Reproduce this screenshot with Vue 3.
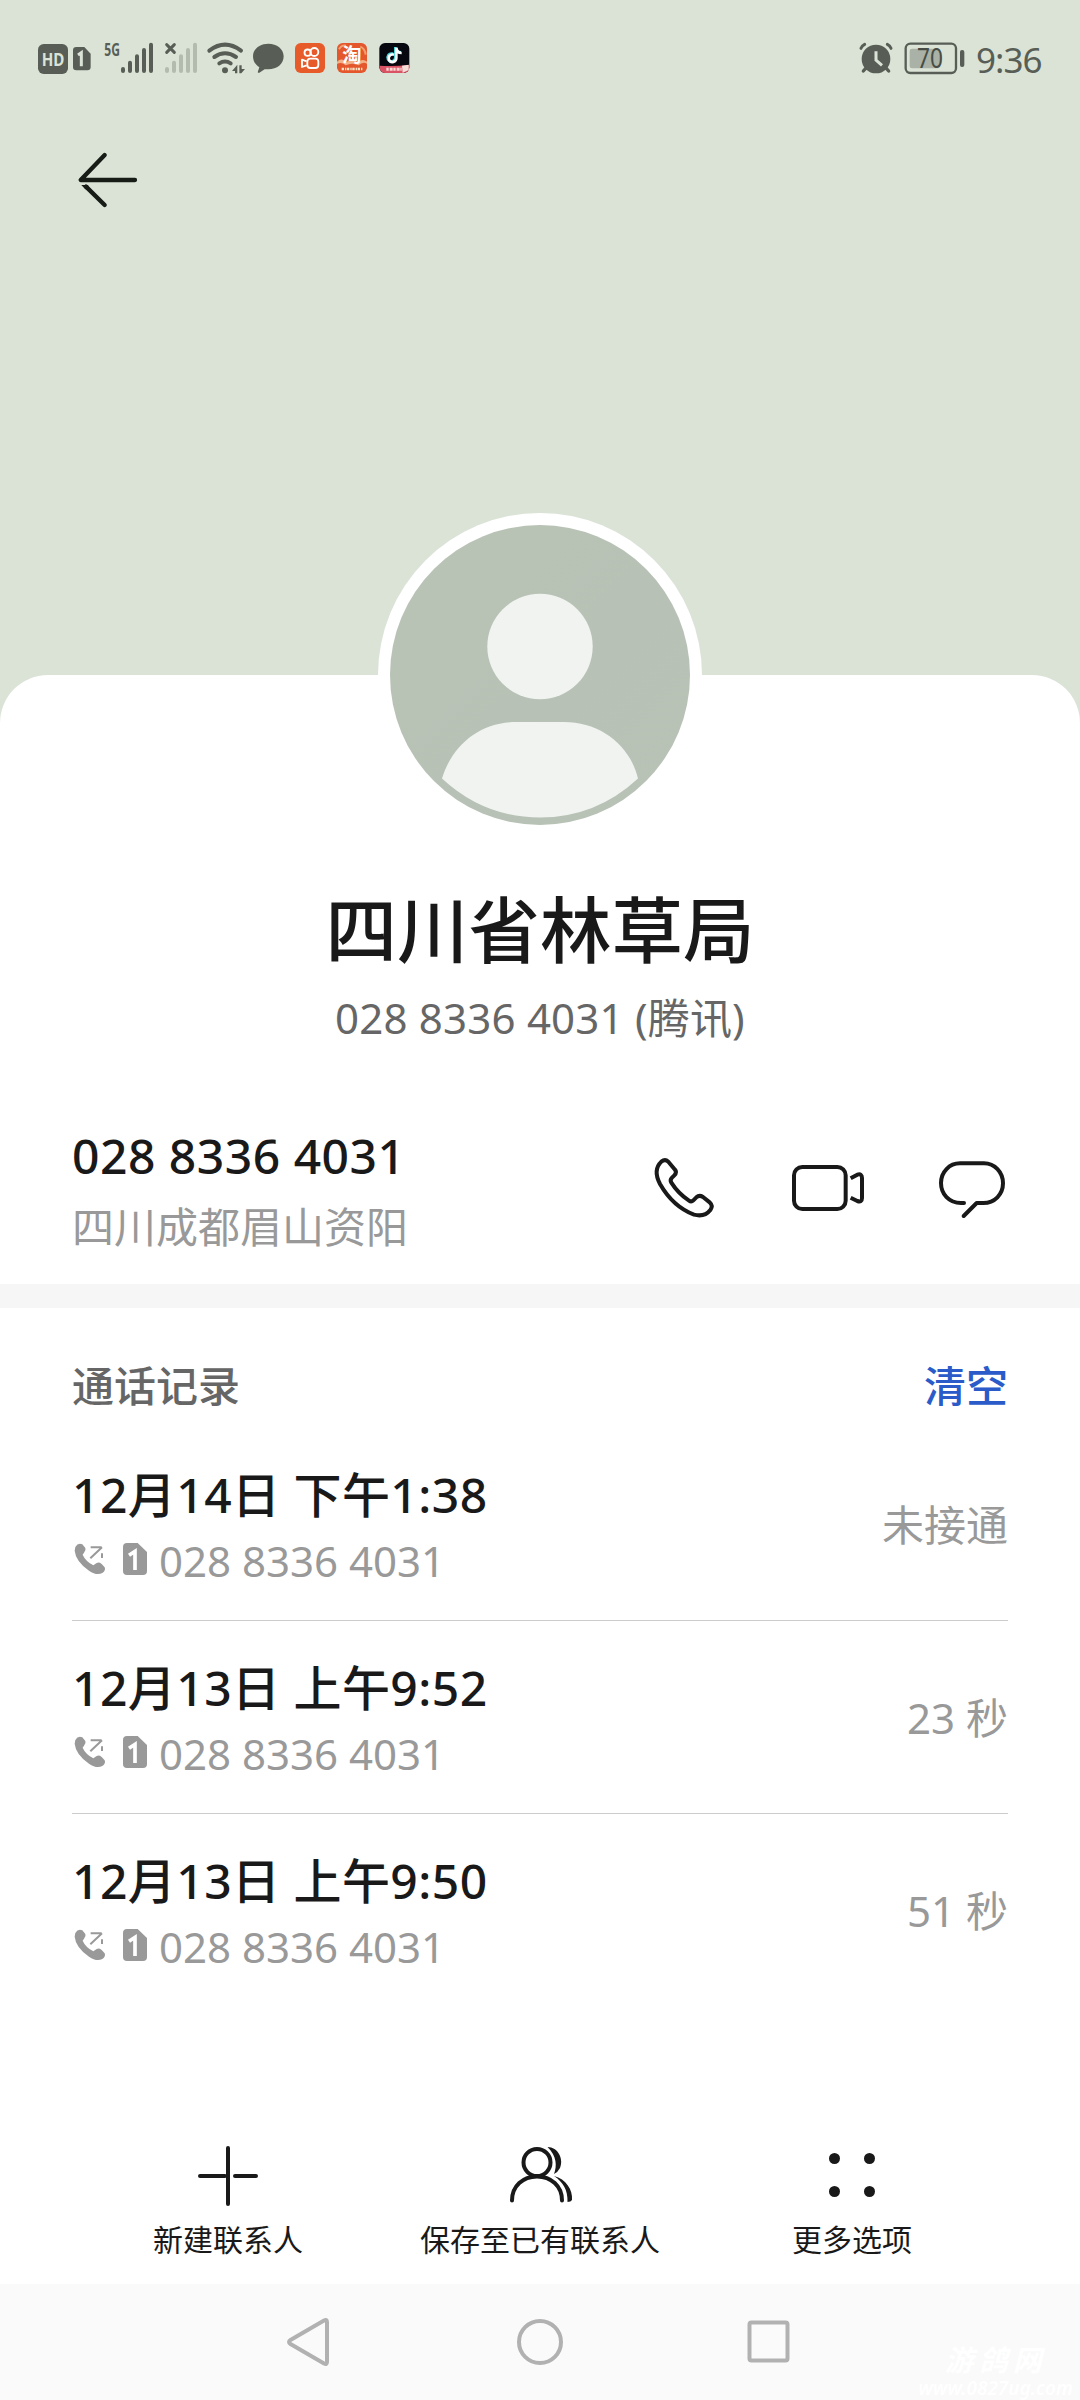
<script setup>
const calls = [
  { time: '12月14日 下午1:38', number: '028 8336 4031', result: '未接通' },
  { time: '12月13日 上午9:52', number: '028 8336 4031', result: '23 秒' },
  { time: '12月13日 上午9:50', number: '028 8336 4031', result: '51 秒' },
]
</script>

<template>
  <div class="screen">
    <header class="hero">
      <div class="status">
        <div class="status-left">
          <!-- HD + SIM -->
          <svg width="80" height="80" viewBox="0 0 240 240">
            <rect x="54" y="72" width="90" height="90" rx="17" class="ink" />
            <text x="99" y="137" text-anchor="middle" class="hd" textLength="68" lengthAdjust="spacingAndGlyphs">HD</text>
            <path class="ink" d="M169 81H193L212 101V141Q212 151 202 151H169Q159 151 159 141V91Q159 81 169 81Z" />
            <path d="M174 105L184 98V139" fill="none" stroke="#dbe3d7" stroke-width="9" />
          </svg>
          <!-- 5G signal -->
          <svg width="58" height="80" viewBox="240 0 174 240">
            <text x="253" y="107" class="g5" textLength="47" lengthAdjust="spacingAndGlyphs">5G</text>
            <g class="bars"><path d="M309 147V153M330 128V153M351 109V153M372 90V153M393 74V153" /></g>
          </svg>
          <!-- SIM without service -->
          <svg width="46" height="80" viewBox="414 0 138 240">
            <path class="bars cross" d="M440 74L463 97M463 74L440 97" />
            <g class="bars dim"><path d="M441 147V153M462 128V153M483 109V153M504 90V153M525 74V153" /></g>
          </svg>
          <!-- Wi-Fi -->
          <svg width="46" height="80" viewBox="552 0 138 240">
            <g fill="none" stroke="#585e55" stroke-width="12" stroke-linecap="round">
              <path d="M568 92Q615 56 663 92" />
              <path d="M583 111Q615 89 648 111" />
              <path d="M598 130Q615 119 632 130" />
            </g>
            <circle cx="615" cy="151" r="9" class="ink" />
            <path class="ink" d="M652 134V160H645V153H636ZM658 136V160H664L675 147H665V136Z" />
          </svg>
          <!-- Message -->
          <svg width="40" height="80" viewBox="690 0 120 240">
            <path class="ink" d="M745 71C771 71 791 87 791 109C791 132 771 148 745 148C741 148 737 147 734 148L718 158Q712 160 714 154L718 142C706 135 699 123 699 109C699 87 719 71 745 71Z" />
          </svg>
          <!-- Short video -->
          <svg width="40" height="80" viewBox="810 0 120 240">
            <rect x="825" y="69" width="90" height="90" rx="17" fill="#e75a2a" />
            <g fill="none" stroke="#fff" stroke-width="5.5">
              <circle cx="863" cy="98" r="9.500" />
              <circle cx="883" cy="96" r="12" />
              <rect x="862" y="116" width="33" height="28" rx="9" />
              <path d="M860 124L846 119V141L860 136" stroke-linejoin="round" />
            </g>
          </svg>
          <!-- Shopping -->
          <svg width="42" height="80" viewBox="930 0 126 240">
            <rect x="951" y="69" width="90" height="90" rx="17" fill="#e4572d" />
            <path d="M951 125Q965 112 978 126Q997 115 1014 127Q1028 114 1041 125V131Q1028 124 1016 136Q996 126 977 136Q964 124 951 132Z" fill="#f3b187" />
            <path d="M957 88Q965 74 978 77M1021 80Q1035 86 1037 104" fill="none" stroke="#f1a071" stroke-width="6" />
            <text x="996" y="125" text-anchor="middle" class="tao">淘</text>
            <path d="M965 147H1029" stroke="#fbe3c6" stroke-width="8" stroke-dasharray="7 3 4 2" />
          </svg>
          <!-- Music video -->
          <svg width="40" height="80" viewBox="1056 0 120 240">
            <rect x="1078" y="69" width="90" height="90" rx="17" fill="#06070f" />
            <path d="M1079 137Q1120 140 1167 135V142Q1167 159 1151 159H1095Q1080 159 1079 142Z" fill="#d95365" />
            <path d="M1146 137L1166 134V150L1148 158Z" fill="#f5ded8" />
            <path d="M1099 148H1145" stroke="#fad6d3" stroke-width="9" stroke-dasharray="7 3 9 2" />
            <g fill="none" stroke-width="8">
              <path d="M1119 101C1106 98 1101 108 1104 118C1110 129 1126 124 1126 112V81C1127 92 1134 97 1143 97" stroke="#48d6d8" />
              <path d="M1122 104C1109 101 1104 111 1107 120C1113 131 1129 126 1129 114V83C1130 94 1137 99 1145 99" stroke="#fff" />
            </g>
          </svg>
        </div>
        <div class="status-right">
          <svg width="60" height="80" viewBox="0 0 180 240">
            <circle cx="108" cy="117" r="43" class="ink" />
            <path d="M77 145L70 153M139 145L146 153" stroke="#585e55" stroke-width="10" stroke-linecap="round" />
            <path d="M63 85Q66 77 74 73M153 85Q150 77 142 73" fill="none" stroke="#585e55" stroke-width="9" stroke-linecap="round" />
            <path d="M108 94V120L126 136" fill="none" stroke="#dbe3d7" stroke-width="9" />
          </svg>
          <svg width="76" height="80" viewBox="180 0 228 240">
            <rect x="197" y="71" width="151" height="88" rx="14" fill="none" stroke="#585e55" stroke-width="7" />
            <rect x="209" y="86" width="91" height="59" rx="7" fill="#aab2a7" />
            <rect x="360" y="90" width="13" height="51" rx="6" class="ink" />
            <text x="270" y="143" text-anchor="middle" class="battery" textLength="78" lengthAdjust="spacingAndGlyphs">70</text>
          </svg>
          <span class="clock">9:36</span>
        </div>
      </div>
      <div class="topbar">
        <svg width="120" height="100" viewBox="0 0 360 300">
          <g fill="none" stroke="#171c16" stroke-width="13" stroke-linecap="round" stroke-linejoin="round">
            <path d="M255 150H92L164 75" />
            <path d="M108 170L164 225" />
          </g>
          <path d="M94 165L114 165L118 176L106 178Z" fill="#171c16" />
        </svg>
      </div>
    </header>

    <main class="sheet">
      <svg class="avatar" width="324" height="324" viewBox="0 0 324 324">
        <defs>
          <linearGradient id="tone" x1="0" y1="0" x2="1" y2="1">
            <stop offset="0" stop-color="#b9c4b5" />
            <stop offset=".55" stop-color="#b7c1b5" />
            <stop offset="1" stop-color="#b8c2b5" />
          </linearGradient>
        </defs>
        <circle cx="162" cy="162" r="162" fill="#fff" />
        <circle cx="162" cy="162" r="150" fill="url(#tone)" />
        <circle cx="162" cy="133.500" r="52.700" fill="#f0f3f0" />
        <path d="M138 209H186C222 209 252 232 260 265.500Q218 304.500 162 304.500Q106 304.500 64 265.500C74 232 102 209 138 209Z" fill="#f0f3f0" />
      </svg>

      <h1 class="name">四川省林草局</h1>
      <p class="carrier">028 8336 4031 (腾讯)</p>

      <section class="phone-row">
        <div>
          <div class="number">028 8336 4031</div>
          <div class="place">四川成都眉山资阳</div>
        </div>
        <div class="actions">
          <svg width="72" height="72" viewBox="84 96 216 216">
            <path d="M124 125Q135 116 145 125L165 149Q172 157 163 166L156 173Q149 180 154 188Q175 221 207 242Q214 247 220 241L229 232Q238 224 249 231L270 248Q280 257 271 270Q254 292 222 284Q159 260 120 192Q98 150 124 125Z" />
          </svg>
          <svg width="72" height="72" viewBox="516 96 216 216">
            <rect x="522" y="141" width="155" height="126" rx="25" />
            <path d="M692 175L712 164Q726 160 726 174V234Q726 248 712 243L692 233" />
          </svg>
          <svg width="72" height="72" viewBox="948 96 216 216">
            <path d="M1032 249H1023C987 249 963 222 963 189S988 130 1020 130H1092C1124 130 1149 157 1149 190S1124 249 1090 249H1070L1031 288" stroke-linecap="round" />
          </svg>
        </div>
      </section>

      <div class="band"></div>

      <div class="log-head">
        <span>通话记录</span>
        <span class="clear">清空</span>
      </div>

      <ul class="log">
        <li v-for="(call, i) in calls" :key="i">
          <div>
            <div class="when">{{ call.time }}</div>
            <div class="via">
              <svg width="48" height="48" viewBox="66 591 144 144">
                <path d="M76 621Q84 607 97 613L106 624Q109 632 102 638L98 644Q106 663 130 676L140 669Q147 665 155 672L164 682Q168 692 157 699Q140 708 117 692Q77 664 74 632Z" fill="#999" />
                <path d="M122 622H155M156 622L121 655M156 640V654" fill="none" stroke="#999" stroke-width="6" />
              </svg>
              <svg width="39" height="48" viewBox="210 591 117 144">
                <path d="M231 609H263L291 636V693Q291 705 279 705H231Q219 705 219 693V621Q219 609 231 609Z" fill="#999" />
                <path d="M237 646L255 634V690" fill="none" stroke="#fff" stroke-width="11" />
              </svg>
              <span>{{ call.number }}</span>
            </div>
          </div>
          <div class="result">{{ call.result }}</div>
        </li>
      </ul>

      <nav class="tools">
        <div class="tool">
          <svg width="72" height="72" viewBox="0 0 72 72">
            <path d="M36 8V64M8 36H33M43 36H64" />
          </svg>
          <span>新建联系人</span>
        </div>
        <div class="tool">
          <svg width="72" height="72" viewBox="0 0 72 72">
            <circle cx="33" cy="22.500" r="13.500" />
            <path d="M8 60.500C8 46 19 36.500 33 36.500S58 46 58 60.500" />
            <path class="solid" d="M43.500 7C54 7 60 19 56 28Q54 32 50 34C53 26 53 16 43.500 7ZM50 36C62 39 69 50 68 60Q67 62 63.500 62C64 50 59 42 50 36Z" />
          </svg>
          <span>保存至已有联系人</span>
        </div>
        <div class="tool">
          <svg width="72" height="72" viewBox="0 0 72 72">
            <g class="solid">
              <circle cx="18.500" cy="18.500" r="5.500" /><circle cx="53.500" cy="18.500" r="5.500" />
              <circle cx="18.500" cy="51.500" r="5.500" /><circle cx="53.500" cy="51.500" r="5.500" />
            </g>
          </svg>
          <span>更多选项</span>
        </div>
      </nav>
    </main>

    <footer class="system">
      <svg width="60" height="60" viewBox="0 0 60 60"><path d="M44 8.500Q47 7 47 10V50Q47 53 44 51.500L10.500 32Q7.500 30 10.500 28Z" /></svg>
      <svg width="60" height="60" viewBox="0 0 60 60"><circle cx="30" cy="30" r="21" /></svg>
      <svg width="60" height="60" viewBox="0 0 60 60"><rect x="9.500" y="10.500" width="38" height="38" rx="2" /></svg>
      <div class="mark"><b>游鸽网</b><span>www.0827ug.com</span></div>
    </footer>
  </div>
</template>

<style>
body { margin: 0; background: #fff; }
</style>

<style scoped>
.screen {
  width: 1080px;
  height: 2400px;
  display: flex;
  flex-direction: column;
  background: #dbe3d7;
  font-family: "Noto Sans", "Noto Sans CJK SC", sans-serif;
  color: #191919;
  overflow: hidden;
}
svg { display: block; flex: none; }
.hero { height: 675px; flex: none; }
.status {
  display: flex;
  justify-content: space-between;
  padding: 20px 0 0 20px;
}
.status-left, .status-right { display: flex; }
.status-right { width: 240px; }
.ink { fill: #585e55; }
.bars { fill: none; stroke: #585e55; stroke-width: 12; stroke-linecap: round; }
.cross { stroke-width: 9; }
.dim { stroke: #b3bbaf; }
.hd { font: 700 52px "Noto Sans", sans-serif; fill: #dbe3d7; }
.g5 { font: 700 52px "Noto Sans", sans-serif; fill: #585e55; }
.tao { font: 700 58px "Noto Sans CJK SC", sans-serif; fill: #fff; }
.battery { font: 400 79px "Noto Sans", sans-serif; fill: #474d44; }
.clock {
  font-size: 35px;
  line-height: 79px;
  letter-spacing: -1px;
  color: #585e55;
}
.topbar { padding: 30px 0 0 50px; }
.sheet {
  height: 1609px;
  flex: none;
  display: flex;
  flex-direction: column;
  background: #fff;
  border-radius: 48px 48px 0 0;
}
.avatar { margin: -162px auto 0; }
.name {
  margin: 43px 0 0;
  height: 100px;
  font-size: 71.5px;
  line-height: 100px;
  font-weight: 500;
  text-align: center;
}
.carrier {
  margin: 7px 0 0;
  height: 60px;
  font-size: 42px;
  line-height: 61px;
  letter-spacing: .2px;
  text-align: center;
  color: #666;
}
.phone-row {
  display: flex;
  justify-content: space-between;
  padding: 77px 72px 0;
  height: 160px;
}
.number { font-size: 48px; line-height: 64px; font-weight: 500; letter-spacing: .5px; }
.place { margin-top: 9px; font-size: 42px; line-height: 60px; color: #999; }
.actions { display: flex; gap: 72px; padding-top: 28px; }
.actions svg { fill: none; stroke: #191919; stroke-width: 12; stroke-linejoin: round; }
.band { height: 24px; flex: none; background: #f6f6f6; }
.log-head {
  display: flex;
  justify-content: space-between;
  margin: 48px 72px 0;
  font-size: 42px;
  line-height: 60px;
  font-weight: 500;
  color: #666;
}
.clear { color: #2a5bc9; }
.log { list-style: none; margin: 12px 72px 0; padding: 0; }
.log li {
  display: flex;
  justify-content: space-between;
  align-items: center;
  box-sizing: border-box;
  height: 193px;
  border-bottom: 1px solid #ccc;
}
.log li:last-child { border-bottom-color: transparent; }
.when {
  font-size: 48px;
  line-height: 66px;
  font-weight: 500;
  letter-spacing: .45px;
  margin-top: -2px;
}
.via {
  display: flex;
  height: 48px;
  margin-top: 9px;
  font-size: 42px;
  line-height: 48px;
  color: #999;
}
.result { font-size: 42px; line-height: 60px; color: #999; padding-top: 1px; }
.tools {
  display: flex;
  justify-content: space-between;
  margin: 133px 72px 0;
}
.tool { width: 312px; display: flex; flex-direction: column; align-items: center; }
.tool span { font-size: 30px; line-height: 40px; margin-top: 8px; white-space: nowrap; }
.tool svg { fill: none; stroke: #191919; stroke-width: 4; stroke-linecap: round; }
.tool svg .solid { fill: #191919; stroke: none; }
.system {
  position: relative;
  flex: none;
  height: 116px;
  display: flex;
  gap: 170px;
  align-items: center;
  justify-content: center;
  background: #fafafa;
}
.system svg { fill: none; stroke: #b1b1b1; stroke-width: 4; }
.mark {
  position: absolute;
  right: 7px;
  bottom: 2px;
  display: flex;
  flex-direction: column;
  align-items: center;
  font-style: italic;
  color: #fff;
}
.mark b { font-size: 29px; line-height: 34px; letter-spacing: 5px; padding-bottom: 1px; }
.mark span { font-size: 19px; line-height: 20px; font-weight: 600; }
</style>
